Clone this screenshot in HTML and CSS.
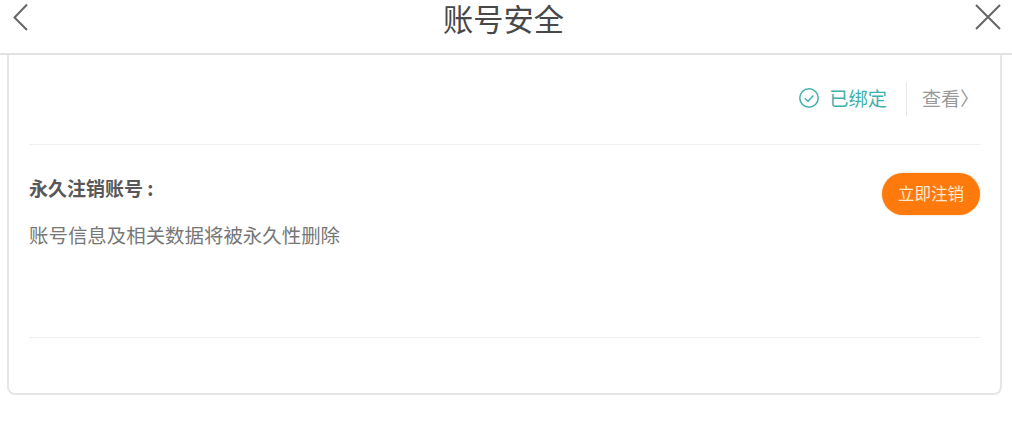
FILE: index.html
```html
<!DOCTYPE html>
<html lang="zh-CN">
<head>
  <meta charset="UTF-8" />
  <meta name="viewport" content="width=device-width, initial-scale=1.0"/>
  <title>账号安全</title>
  <link rel="stylesheet" href="styles.css">
</head>

<body>
  <header class="topbar">
    <svg class="back" width="18" height="28" viewBox="0 0 18 28">
      <path d="M15 1.5 L2.5 14.5 L15 27" fill="none" stroke="#666" stroke-width="2"/>
    </svg>
    <h1 class="title">账号安全</h1>
    <svg class="close" width="28" height="28" viewBox="0 0 28 28">
      <path d="M2 3 L26 27 M26 3 L2 27" fill="none" stroke="#666" stroke-width="2"/>
    </svg>
  </header>

  <main class="card">
    <div class="row-bound">
      <svg class="check" width="22" height="22" viewBox="0 0 22 22">
        <circle cx="11" cy="11" r="9.2" fill="none" stroke="#3fb1ac" stroke-width="1.5"/>
        <path d="M6.8 11.2 L10 14.2 L15.4 8.4" fill="none" stroke="#3fb1ac" stroke-width="1.5"/>
      </svg>
      <span class="bound">已绑定</span>
      <span class="view">查看〉</span>
    </div>

    <div class="row-cancel">
      <div>
        <h2 class="cancel-title">永久注销账号 :</h2>
        <p class="cancel-desc">账号信息及相关数据将被永久性删除</p>
      </div>
      <button class="cancel-btn" type="button">立即注销</button>
    </div>
  </main>
</body>
</html>
```

FILE: styles.css
```css
* {
  box-sizing: border-box;
}

body {
  margin: 0;
  height: 430px;
  overflow: hidden;
  background: #fff;
  font-family: "Noto Sans CJK SC", "Liberation Sans", sans-serif;
}

.topbar {
  height: 55px;
  padding: 0 10px 0 12px;
  display: flex;
  justify-content: space-between;
  align-items: flex-start;
  border-bottom: 2px solid #e2e2e2;
}

.back {
  margin-top: 3px;
}

.close {
  margin-top: 2px;
}

.title {
  margin: 0 0 0 3px;
  font-size: 30.25px;
  line-height: 36px;
  font-weight: 400;
  color: #484848;
}

.card {
  height: 340px;
  margin: 0 10px 0 7px;
  padding: 0 20px 0 20px;
  border: 2px solid #e6e6e6;
  border-top: none;
  border-radius: 0 0 8px 8px;
}

.row-bound {
  height: 90px;
  padding: 25px 0 0;
  display: flex;
  justify-content: flex-end;
  align-items: flex-start;
  border-bottom: 1px solid #efefef;
}

.check {
  margin: 7px 9px 0 0;
}

.bound {
  font-size: 19.25px;
  line-height: 36px;
  color: #3fb1ac;
}

.view {
  margin: 2px 0 0 19px;
  padding-left: 15px;
  padding-right: 1px;
  height: 34px;
  font-size: 19px;
  line-height: 32px;
  color: #999;
  border-left: 1px solid #e8e8e8;
}

.row-cancel {
  height: 193px;
  padding-top: 28px;
  display: flex;
  justify-content: space-between;
  align-items: flex-start;
  border-bottom: 1px solid #efefef;
}

.cancel-title {
  margin: 2px 0 0;
  font-size: 19px;
  line-height: 26px;
  font-weight: 700;
  color: #585858;
}

.cancel-desc {
  margin: 21px 0 0;
  font-size: 19.45px;
  line-height: 26px;
  color: #777;
}

.cancel-btn {
  width: 98px;
  height: 42px;
  padding: 0 0 2px;
  border: none;
  border-radius: 21px;
  background: #ff7a0d;
  box-shadow: 0 0 2px #e0c090;
  font-family: inherit;
  font-size: 16.5px;
  color: #ffe9d0;
}
```
